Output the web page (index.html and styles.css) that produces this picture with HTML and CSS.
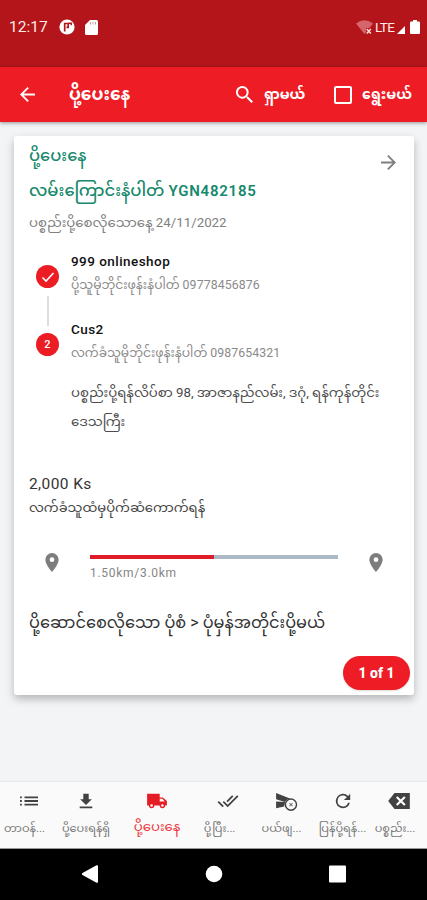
FILE: index.html
```html
<!DOCTYPE html>
<html lang="my">
<head>
<meta charset="utf-8">
<title>ပို့ပေးနေ</title>
<link rel="stylesheet" href="styles.css">
</head>
<body>
<div class="screen">
  <header class="status">
    <span class="clock">12:17</span>
    <svg class="s-app" viewBox="0 0 16 16"><circle cx="8" cy="8" r="7.600" fill="#fff"/><path d="M5.700 12.500V4.500h3.500v3.800H7.500" fill="none" stroke="#b3151a" stroke-width="1.700"/><path d="M9.500 4.300h2.800v2" fill="none" stroke="#b3151a" stroke-width="1.500"/></svg>
    <svg class="s-sd" viewBox="0 0 13 15"><path d="M5 0h6.500A1.500 1.500 0 0 1 13 1.500v12A1.500 1.500 0 0 1 11.500 15h-10A1.500 1.500 0 0 1 0 13.500V5z" fill="#fff"/><path d="M5.500 2v2.500M8 2v2.500M10.500 2v2.500" stroke="#c99" stroke-width="1"/></svg>
    <span class="grow"></span>
    <svg class="s-wifi" viewBox="0 0 17 15"><path d="M0 3.500Q8.500-3 17 3.500L8.500 14z" fill="#d5656a"/><path d="M10 8h6v6h-6z" fill="#b3151a"/><path d="M10.800 9l4 4.500m0-4.500l-4 4.500" stroke="#ffe3d8" stroke-width="1.500"/></svg>
    <span class="lte">LTE</span>
    <svg class="s-signal" viewBox="0 0 8 8"><path d="M8 0v8H0z" fill="#fff"/></svg>
    <svg class="s-batt" viewBox="0 0 10 14"><path d="M3 0h4v1.500h2a1 1 0 0 1 1 1V13a1 1 0 0 1-1 1H1a1 1 0 0 1-1-1V2.500a1 1 0 0 1 1-1h2z" fill="#fff"/></svg>
  </header>

  <div class="appbar">
    <svg class="back" viewBox="4 4 16 16"><path d="M20 11H7.830l5.590-5.590L12 4l-8 8 8 8 1.410-1.410L7.830 13H20z" fill="#fff"/></svg>
    <h1 class="title">ပို့ပေးနေ</h1>
    <svg class="search" viewBox="3 3 17.500 17.500"><path d="M15.500 14h-.79l-.28-.27A6.500 6.500 0 1 0 13.730 14.430l.27.28v.79l5 4.990L20.490 19zm-6 0a4.500 4.500 0 1 1 0-9 4.500 4.500 0 0 1 0 9z" fill="#fff"/></svg>
    <span class="act act-search">ရှာမယ်</span>
    <span class="box"></span>
    <span class="act act-pick">ရွေးမယ်</span>
  </div>

  <main class="content">
    <article class="card">
      <div class="head">
        <div class="line state">ပို့ပေးနေ</div>
        <svg class="go" viewBox="4 4 16 16"><path d="M12 4l-1.410 1.410L16.170 11H4v2h12.170l-5.580 5.590L12 20l8-8z" fill="#808080"/></svg>
      </div>
      <div class="line track">လမ်းကြောင်းနံပါတ် <b class="code">YGN482185</b></div>
      <div class="line date">ပစ္စည်းပို့စေလိုသောနေ့ <span>24/11/2022</span></div>

      <div class="steps">
        <div class="rail">
          <span class="dot"><svg viewBox="0 0 14 14"><path d="M1.500 7.500l3.500 3.500 7.500-8" fill="none" stroke="#fff" stroke-width="1.600"/></svg></span>
          <span class="link"></span>
          <span class="dot">2</span>
        </div>
        <div class="who">
          <div class="name">999 onlineshop</div>
          <div class="phone">ပို့သူမိုဘိုင်းဖုန်းနံပါတ် <span class="num">09778456876</span></div>
          <div class="name second">Cus2</div>
          <div class="phone">လက်ခံသူမိုဘိုင်းဖုန်းနံပါတ် <span class="num">0987654321</span></div>
          <div class="addr addr1">ပစ္စည်းပို့ရန်လိပ်စာ 98, အာဇာနည်လမ်း, ဒဂုံ, ရန်ကုန်တိုင်း</div>
          <div class="addr">ဒေသကြီး</div>
        </div>
      </div>

      <div class="price">2,000 Ks</div>
      <div class="collect">လက်ခံသူထံမှပိုက်ဆံကောက်ရန်</div>

      <div class="route">
        <svg class="pin" viewBox="5 2 14 20"><path d="M12 2a7 7 0 0 0-7 7c0 5.250 7 13 7 13s7-7.750 7-13a7 7 0 0 0-7-7zm0 9.500a2.500 2.500 0 1 1 0-5 2.500 2.500 0 0 1 0 5z" fill="#7d7d7d"/></svg>
        <div class="meter">
          <div class="bar"><div class="fill"></div></div>
          <div class="dist">1.50km/3.0km</div>
        </div>
        <svg class="pin" viewBox="5 2 14 20"><path d="M12 2a7 7 0 0 0-7 7c0 5.250 7 13 7 13s7-7.750 7-13a7 7 0 0 0-7-7zm0 9.500a2.500 2.500 0 1 1 0-5 2.500 2.500 0 0 1 0 5z" fill="#7d7d7d"/></svg>
      </div>

      <div class="mode">ပို့ဆောင်စေလိုသော ပုံစံ &gt; ပုံမှန်အတိုင်းပို့မယ်</div>
      <div class="count">1 of 1</div>
    </article>
  </main>

  <nav class="tabs">
    <div class="tab shift"><svg viewBox="0 0 24 20"><path d="M2 5h2v2H2zm0 4h2v2H2zm0 4h2v2H2zM7 5h15v2H7zm0 4h15v2H7zm0 4h15v2H7z"/></svg><span>တာဝန်...</span></div>
    <div class="tab"><svg viewBox="0 0 24 20"><path d="M18.500 8H15V2H9v6H5.500L12 14.500zM5 16h14v2H5z"/></svg><span>ပို့ပေးရန်ရှိ</span></div>
    <div class="tab on"><svg viewBox="0 0 24 20"><path d="M18.500 6H15V2H1v13h2a3 3 0 0 0 6 0h6a3 3 0 0 0 6 0h2v-5zM6 16.500a1.500 1.500 0 1 1 0-3 1.500 1.500 0 0 1 0 3zM18 7.500l2.500 3H15v-3zm0 9a1.500 1.500 0 1 1 0-3 1.500 1.500 0 0 1 0 3z"/></svg><span>ပို့ပေးနေ</span></div>
    <div class="tab far"><svg viewBox="0 0 24 20"><path d="M18 5l-1.410-1.410-6.340 6.340 1.410 1.410zm4.240-1.410L11.660 14.170 7.480 10l-1.410 1.410L11.660 17l12-12zM.41 11.410L6 17l1.410-1.410L1.830 10z"/></svg><span>ပို့ပြီး...</span></div>
    <div class="tab shift"><svg viewBox="0 0 24 20"><path d="M1 1l16 6.500a7 7 0 0 0-6 3.500L1 8zM1 10.500l10 .5-1 5-9 2z"/><circle cx="17.500" cy="14" r="6.200" fill="#fafafa" stroke="#424242" stroke-width="1.600"/><path d="M15.800 12.300l3.400 3.400m0-3.400l-3.400 3.400" stroke="#777" stroke-width="1.200"/></svg><span>ပယ်ဖျ...</span></div>
    <div class="tab"><svg viewBox="0 0 24 20"><path d="M17.650 4.350A8 8 0 1 0 19.730 12h-2.080A6 6 0 1 1 12 4c1.660 0 3.140.690 4.220 1.780L13 9h7V2z"/></svg><span>ပြန်ပို့ရန်...</span></div>
    <div class="tab shift"><svg viewBox="0 0 24 20"><path d="M24 1H7L0 10l7 9h17z"/><path d="M9.500 5.500l9 9m0-9l-9 9" stroke="#fff" stroke-width="2.400"/></svg><span>ပစ္စည်း...</span></div>
  </nav>

  <footer class="sys">
    <svg viewBox="0 0 18 20"><path d="M15.500 1.300L1.500 9a1.100 1.100 0 0 0 0 2l14 7.700a1 1 0 0 0 1.500-.9V2.200a1 1 0 0 0-1.500-.9z" fill="#fff"/></svg>
    <svg viewBox="0 0 18 20"><circle cx="9" cy="10" r="8.300" fill="#fff"/></svg>
    <svg viewBox="0 0 18 20"><rect x="0" y="1.500" width="17" height="17" rx="1" fill="#fff"/></svg>
  </footer>
</div>
</body>
</html>
```
FILE: styles.css
```css
* { box-sizing: border-box; }
body { margin: 0; font-family: Roboto, "Noto Sans", "Noto Sans Myanmar", "Padauk", sans-serif; color: #222; }
svg { display: block; flex: none; overflow: visible; }
.screen { width: 427px; height: 900px; display: flex; flex-direction: column; background: #f3f4f6; overflow: hidden; white-space: nowrap; }

.status { height: 67px; flex: none; display: flex; align-items: center; padding: 0 7px 13px 9px; background: #b3151a; color: #ffebe5; font-size: 15.5px; }
.clock { width: 50px; }
.s-app { width: 16px; height: 16px; }
.s-sd { width: 13px; height: 15px; margin-left: 10px; }
.grow { flex: 1; }
.s-wifi { width: 17px; height: 15px; }
.lte { font-size: 13.500px; margin: 0 2px; width: 20px; letter-spacing: -.6px; }
.s-signal { width: 8px; height: 8px; margin: 6px 5px 0 0; }
.s-batt { width: 10px; height: 14px; }

.appbar { height: 55px; flex: none; display: flex; align-items: center; padding-left: 20px; background: #ee1c25; color: #fff; box-shadow: 0 1px 4px rgba(0,0,0,.4); z-index: 1; }
.back { width: 15px; height: 15px; }
.title { margin: 0 0 0 34px; width: 167px; font-size: 17px; font-weight: 700; line-height: 28px; height: 30px; }
.search { width: 17px; height: 17px; }
.act { font-size: 14.200px; font-weight: 700; line-height: 28px; height: 30px; }
.act-search { width: 70px; margin-left: 11px; }
.box { width: 18px; height: 18px; border: 2px solid #fff; border-radius: 2px; }
.act-pick { margin-left: 10px; }

.content { flex: 1; padding: 14px 13px 0 14px; }
.card { height: 559px; padding: 7px 4px 0 15px; background: #fff; border-radius: 3px; box-shadow: 0 4px 8px rgba(0,0,0,.26); display: flex; flex-direction: column; }
.head { display: flex; justify-content: space-between; height: 30px; flex: none; padding-right: 14px; }
.go { width: 15px; height: 15px; margin-top: 12px; }
.line { height: 30px; line-height: 26px; flex: none; }
.state { font-size: 16.300px; font-weight: 500; color: #16886c; }
.track { height: 34px; line-height: 35px; font-size: 16.400px; font-weight: 500; color: #16886c; }
.code { font-size: 15px; font-weight: 600; letter-spacing: .75px; }
.date { height: 31px; line-height: 31px; font-size: 13.300px; color: #808080; }

.steps { display: flex; padding-left: 7px; flex: none; height: 206px; }
.rail { width: 23px; display: flex; flex-direction: column; align-items: center; padding-top: 27px; margin-right: 12px; }
.dot { width: 23px; height: 23px; border-radius: 50%; background: #ec1c24; color: #fff; font-size: 11px; font-weight: 500; display: flex; align-items: center; justify-content: center; flex: none; }
.dot svg { width: 14px; height: 14px; }
.link { width: 2px; height: 30px; margin: 8px 0 7px; background: #ddd; }
.who { padding-top: 14px; }
.name { font-size: 13.500px; letter-spacing: .45px; font-weight: 500; line-height: 19px; height: 20px; color: #111; }
.second { margin-top: 23px; }
.phone { font-size: 12.300px; line-height: 26px; height: 25px; color: #8a8a8a; }
.num { letter-spacing: .1px; }
.addr { font-size: 13.270px; line-height: 29px; height: 29px; color: #4c4c4c; }
.addr1 { margin-top: 13px; }

.price { font-size: 15.500px; line-height: 24px; margin-top: 28px; letter-spacing: .4px; color: #333; }
.collect { font-size: 13.200px; line-height: 23px; height: 23px; color: #444; }
.route { display: flex; margin: 34px 0 0 16px; height: 40px; flex: none; }
.pin { width: 14px; height: 19px; }
.meter { width: 248px; margin: 2px 31px 0; }
.bar { height: 4px; background: #abbac5; }
.fill { width: 50%; height: 4px; background: #dd1e2a; }
.dist { font-size: 12px; letter-spacing: .72px; line-height: 28px; color: #858585; }
.mode { font-size: 16.150px; line-height: 30px; height: 30px; margin-top: 15px; color: #333; }
.count { align-self: flex-end; margin-top: 18px; width: 67px; height: 34px; border-radius: 17px; background: #ee1c25; color: #fff; font-size: 14px; font-weight: 800; line-height: 34px; text-align: center; box-shadow: 0 1px 2px rgba(0,0,0,.15); }

.tabs { height: 67px; flex: none; display: grid; grid-template-columns: 57px 58px 84px 58px 57px 57px 56px; background: #fafafa; border-bottom: 1px solid #999; box-shadow: 0 -1px 1px #e9eaec; }
.tab { display: flex; flex-direction: column; align-items: center; padding-top: 10px; font-size: 11.300px; color: #777; fill: #424242; min-width: 0; }
.tab svg { width: 22px; height: 18px; }
.tab span { line-height: 25px; margin-top: 6px; }
.tab.shift span { margin-right: 8px; }
.tab.far span { margin-right: 17px; }
.tab.on { color: #ee3b43; fill: #e51c25; font-size: 13.300px; }
.tab.on span { margin-top: 4px; }
.sys { height: 51px; flex: none; background: #000; display: grid; grid-template-columns: 18px 18px 18px; column-gap: 106px; padding: 15px 0 0 81px; }
.sys svg { width: 18px; height: 20px; }
```
